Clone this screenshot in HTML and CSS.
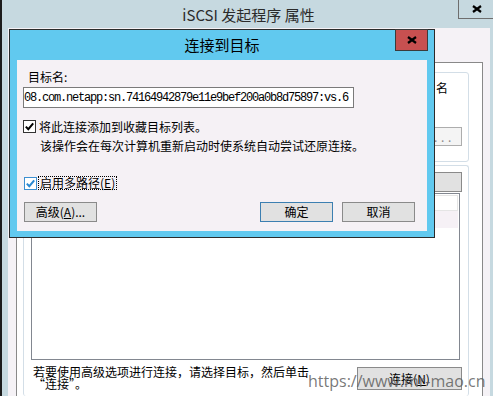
FILE: index.html
```html
<!DOCTYPE html>
<html lang="zh-CN">
<head>
  <meta charset="UTF-8" />
  <title>连接到目标</title>
  <link rel="stylesheet" href="styles.css">
</head>
<body>

  <!-- 父窗口：iSCSI 发起程序 属性 -->
  <div class="win">
    <div class="win-title">
      <span>iSCSI 发起程序 属性</span>
      <div class="win-close">
        <svg width="10" height="8" viewBox="0 0 10 8"><path d="M1 1 L9 7 M9 1 L1 7" stroke="#000" stroke-width="2.2" fill="none"/></svg>
      </div>
    </div>
    <div class="win-client">
      <div class="tab-page">
        <div class="group quick">
          <p class="quick-line1">若要发现目标并使用基本连接登录到目标，请键入该目标的 IP 地址或 DNS 名</p>
          <p class="quick-line2">称，然后单击“快速连接”。</p>
          <div class="quick-row">
            <span>目标(T):</span>
            <span class="textbox"></span>
            <div class="btn btn-off">快速连接(Q)<span class="dots">...</span></div>
          </div>
        </div>
        <div class="group found">
          <div class="found-head">
            <span>已发现的目标(G)</span>
            <div class="btn btn-refresh">刷新(R)</div>
          </div>
          <div class="listbox">
            <div class="list-head"><span>名称</span><span>状态</span></div>
            <div class="list-row"></div>
          </div>
          <div class="found-foot">
            <p>若要使用高级选项进行连接，请选择目标，然后单击<br>“连接”。</p>
            <div class="btn btn-connect">连接(<u>N</u>)</div>
          </div>
        </div>
      </div>
    </div>
  </div>

  <!-- 对话框：连接到目标 -->
  <div class="dialog">
    <div class="dlg-title">连接到目标</div>
    <div class="dlg-close">
      <svg width="10" height="8" viewBox="0 0 10 8"><path d="M1 1 L9 7 M9 1 L1 7" stroke="#000" stroke-width="2.2" fill="none"/></svg>
    </div>
    <div class="dlg-client">
      <div class="field-label">目标名:</div>
      <div class="iqn-box"><span>iqn.1992-08.com.netapp:sn.74164942879e11e9bef200a0b8d75897:vs.6</span></div>

      <div class="check-row">
        <svg class="check" width="13" height="13" viewBox="0 0 13 13">
          <rect x="0.5" y="0.5" width="12" height="12" fill="#fff" stroke="#333"/>
          <path d="M2.8 6.6 L5.3 9.2 L10.2 3.4" stroke="#000" stroke-width="2" fill="none"/>
        </svg>
        <span>将此连接添加到收藏目标列表。</span>
      </div>
      <div class="hint">该操作会在每次计算机重新启动时使系统自动尝试还原连接。</div>

      <div class="check-row multi">
        <svg class="check" width="13" height="13" viewBox="0 0 13 13">
          <rect x="0.5" y="0.5" width="12" height="12" fill="#fff" stroke="#3d8fd1"/>
          <path d="M2.8 6.6 L5.3 9.2 L10.2 3.4" stroke="#2a88d2" stroke-width="2" fill="none"/>
        </svg>
        <span class="focus">启用多路径(<u>E</u>)</span>
      </div>

      <div class="dlg-buttons">
        <div class="btn">高级(<u>A</u>)...</div>
        <div class="btn btn-default">确定</div>
        <div class="btn">取消</div>
      </div>
    </div>
  </div>

  <div class="watermark">https://www.mr-mao.cn</div>

</body>
</html>
```

FILE: styles.css
```css
* {
  box-sizing: border-box;
}
html, body {
  margin: 0;
  padding: 0;
  width: 493px;
  height: 396px;
  overflow: hidden;
  background: #1c1c1c;
  font-family: "Noto Sans CJK SC", sans-serif;
  font-size: 12px;
  color: #000;
}
p {
  margin: 0;
}
u {
  text-decoration: underline;
}

/* 父窗口 */
.win {
  margin-left: 2px;
  width: 491px;
  height: 396px;
  background: #c6d9e0;
  display: flex;
  flex-direction: column;
}
.win-title {
  position: relative;
  height: 28px;
  display: flex;
  align-items: center;
  justify-content: center;
  font-size: 15px;
  color: #2b2b2b;
  padding-left: 2px;
}
.win-close {
  position: absolute;
  top: 0;
  right: 0;
  width: 35px;
  height: 19px;
  border-left: 1px solid #6e6e6e;
  border-bottom: 1px solid #6e6e6e;
  display: flex;
  align-items: center;
  justify-content: center;
  padding-left: 2px;
}
.win-client {
  flex: 1;
  margin: 0 3px 0 6px;
  background: #f5f2f6;
  padding: 34px 7px 0 8px;
  display: flex;
  flex-direction: column;
}
.tab-page {
  flex: 1;
  background: #fff;
  border: 1px solid #898989;
  border-bottom: none;
  padding: 9px 13px 0 6px;
  display: flex;
  flex-direction: column;
}
.group {
  border: 1px solid #d3dee7;
  border-radius: 3px;
}
.quick {
  height: 90px;
  padding: 8px 6px 0 10px;
  line-height: 14px;
}
.quick-line1 {
  text-align: right;
  white-space: nowrap;
  padding-right: 14px;
}
.quick-row {
  margin-top: 18px;
  display: flex;
  align-items: center;
  gap: 8px;
}
.textbox {
  flex: 1;
  height: 19px;
  border: 1px solid #adadad;
}
.found {
  flex: 1;
  margin-top: 3px;
  border-bottom: none;
  padding-top: 6px;
}
.found-head {
  display: flex;
  justify-content: space-between;
  align-items: center;
  padding: 0 6px 0 10px;
}
.listbox {
  margin: 1px 8px 0 7px;
  height: 167px;
  border: 1px solid #828790;
  padding: 1px;
}
.list-head {
  height: 16px;
  border: 1px solid #e5e5e5;
  border-left: none;
  display: flex;
  gap: 220px;
  padding-left: 6px;
  line-height: 14px;
}
.list-row {
  height: 17px;
  background: #f6f1f6;
}
.found-foot {
  display: flex;
  justify-content: space-between;
  align-items: flex-start;
  padding: 0 6px 0 9px;
  margin-top: 6px;
  line-height: 12px;
}

/* 按钮 */
.btn {
  width: 73px;
  height: 20px;
  background: #e1e1e1;
  border: 1px solid #8a8a8a;
  display: flex;
  align-items: center;
  justify-content: center;
  white-space: nowrap;
  overflow: hidden;
  line-height: 14px;
}
.btn-off {
  width: 110px;
  height: 19px;
  background: #f4f4f4;
  border-color: #adadad;
  color: #8a8a8a;
  justify-content: flex-end;
  padding-right: 6px;
}
.dots {
  letter-spacing: 3.7px;
}
.btn-refresh {
  width: 96px;
}
.btn-connect {
  width: 105px;
  height: 23px;
  margin-top: 1px;
}
.btn-default {
  border-color: #3c7fb1;
  margin-left: auto;
}

/* 对话框 */
.dialog {
  position: absolute;
  left: 9px;
  top: 29px;
  width: 426px;
  height: 209px;
  border: 1px solid #2b2b2b;
  background: #61c9ef;
  padding: 0 7px 6px 7px;
  display: flex;
  flex-direction: column;
}
.dlg-title {
  height: 30px;
  display: flex;
  align-items: center;
  justify-content: center;
  font-size: 15px;
  padding-bottom: 1px;
}
.dlg-close {
  position: absolute;
  top: -1px;
  right: 6px;
  width: 33px;
  height: 22px;
  background: #c75050;
  border: 1px solid #3b3b3b;
  display: flex;
  align-items: center;
  justify-content: center;
}
.dlg-client {
  flex: 1;
  background: #f5f1f5;
  padding: 10px 12px 0 6px;
  line-height: 14px;
}
.field-label {
  margin-left: 5px;
}
.iqn-box {
  margin-top: 3px;
  width: 331px;
  height: 21px;
  border: 1px solid #7a7a7a;
  background: #fff;
  display: flex;
  justify-content: flex-end;
  align-items: center;
  overflow: hidden;
  padding-right: 5px;
  white-space: nowrap;
  font-family: "Liberation Mono", monospace;
  font-size: 12px;
  letter-spacing: -1.2px;
}
.check-row {
  margin-top: 12px;
  display: flex;
  align-items: center;
  gap: 3px;
  height: 13px;
}
.check {
  flex: none;
}
.hint {
  margin-top: 6px;
  padding-left: 17px;
}
.check-row.multi {
  margin-top: 23px;
  margin-left: 1px;
  height: 14px;
  gap: 1px;
}
.focus {
  border: 1px dotted #000;
  padding: 0 1px;
  line-height: 12px;
}
.dlg-buttons {
  margin-top: 12px;
  display: flex;
  gap: 9px;
  padding-left: 1px;
}

.watermark {
  position: absolute;
  left: 308px;
  top: 371px;
  font-family: "Open Sans", sans-serif;
  font-size: 16px;
  line-height: 20px;
  color: rgba(95, 95, 95, 0.85);
}
```
